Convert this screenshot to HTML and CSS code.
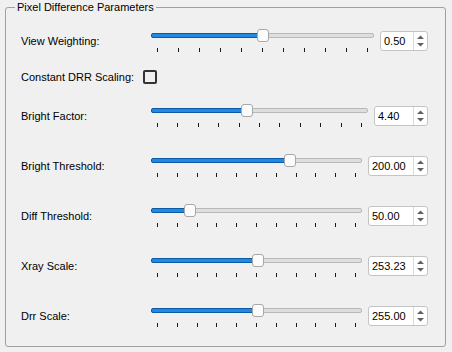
FILE: index.html
```html
<!DOCTYPE html>
<html lang="en">
<head>
    <meta charset="UTF-8">
    <title>Pixel Difference Parameters</title>
    <link rel="stylesheet" href="styles.css">
</head>
<body>
    <fieldset class="group">
        <legend>Pixel Difference Parameters</legend>
        <div class="form">
            <div class="row first">
                <span class="label">View Weighting:</span>
                <div class="slider" style="--v: 0.5">
                    <div class="track"><div class="fill"></div></div>
                    <div class="handle"></div>
                    <div class="ticks"><i></i><i></i><i></i><i></i><i></i><i></i><i></i><i></i><i></i><i></i><i></i></div>
                </div>
                <div class="spin w48">
                    <span class="value">0.50</span>
                    <span class="arrows"><svg width="9" height="12" viewBox="0 0 9 12"><polygon points="1,4 4.5,0.5 8,4" /><polygon points="1,8 4.5,11.5 8,8" /></svg></span>
                </div>
            </div>

            <div class="row check-row">
                <span class="label">Constant DRR Scaling:</span>
                <span class="checkbox"></span>
            </div>

            <div class="row third">
                <span class="label">Bright Factor:</span>
                <div class="slider" style="--v: 0.44">
                    <div class="track"><div class="fill"></div></div>
                    <div class="handle"></div>
                    <div class="ticks"><i></i><i></i><i></i><i></i><i></i><i></i><i></i><i></i><i></i><i></i><i></i></div>
                </div>
                <div class="spin w54">
                    <span class="value">4.40</span>
                    <span class="arrows"><svg width="9" height="12" viewBox="0 0 9 12"><polygon points="1,4 4.5,0.5 8,4" /><polygon points="1,8 4.5,11.5 8,8" /></svg></span>
                </div>
            </div>

            <div class="row">
                <span class="label">Bright Threshold:</span>
                <div class="slider" style="--v: 0.667">
                    <div class="track"><div class="fill"></div></div>
                    <div class="handle"></div>
                    <div class="ticks"><i></i><i></i><i></i><i></i><i></i><i></i><i></i><i></i><i></i><i></i><i></i></div>
                </div>
                <div class="spin w60">
                    <span class="value">200.00</span>
                    <span class="arrows"><svg width="9" height="12" viewBox="0 0 9 12"><polygon points="1,4 4.5,0.5 8,4" /><polygon points="1,8 4.5,11.5 8,8" /></svg></span>
                </div>
            </div>

            <div class="row">
                <span class="label">Diff Threshold:</span>
                <div class="slider" style="--v: 0.167">
                    <div class="track"><div class="fill"></div></div>
                    <div class="handle"></div>
                    <div class="ticks"><i></i><i></i><i></i><i></i><i></i><i></i><i></i><i></i><i></i><i></i><i></i></div>
                </div>
                <div class="spin w60">
                    <span class="value">50.00</span>
                    <span class="arrows"><svg width="9" height="12" viewBox="0 0 9 12"><polygon points="1,4 4.5,0.5 8,4" /><polygon points="1,8 4.5,11.5 8,8" /></svg></span>
                </div>
            </div>

            <div class="row">
                <span class="label">Xray Scale:</span>
                <div class="slider" style="--v: 0.506">
                    <div class="track"><div class="fill"></div></div>
                    <div class="handle"></div>
                    <div class="ticks"><i></i><i></i><i></i><i></i><i></i><i></i><i></i><i></i><i></i><i></i><i></i></div>
                </div>
                <div class="spin w60">
                    <span class="value">253.23</span>
                    <span class="arrows"><svg width="9" height="12" viewBox="0 0 9 12"><polygon points="1,4 4.5,0.5 8,4" /><polygon points="1,8 4.5,11.5 8,8" /></svg></span>
                </div>
            </div>

            <div class="row">
                <span class="label">Drr Scale:</span>
                <div class="slider" style="--v: 0.51">
                    <div class="track"><div class="fill"></div></div>
                    <div class="handle"></div>
                    <div class="ticks"><i></i><i></i><i></i><i></i><i></i><i></i><i></i><i></i><i></i><i></i><i></i></div>
                </div>
                <div class="spin w60">
                    <span class="value">255.00</span>
                    <span class="arrows"><svg width="9" height="12" viewBox="0 0 9 12"><polygon points="1,4 4.5,0.5 8,4" /><polygon points="1,8 4.5,11.5 8,8" /></svg></span>
                </div>
            </div>
        </div>
    </fieldset>
</body>
</html>
```

FILE: styles.css
```css
body {
    margin: 0;
    background-color: #f0f0f0;
    font-family: 'Liberation Sans', Arial, sans-serif;
    font-size: 11px;
    color: #000;
}
.group {
    box-sizing: border-box;
    width: 441px;
    margin: 0 0 0 5px;
    padding: 14px 17px 18px 9px;
    border: 1px solid #a0a0a0;
    border-radius: 3px;
}
.group legend {
    padding: 0 2px;
    line-height: 15px;
}
.form {
    padding-left: 6px;
    display: flex;
    flex-direction: column;
}
.row {
    display: grid;
    grid-template-columns: 122px 1fr auto;
    align-items: center;
    height: 24px;
    margin-top: 26px;
}
.row.first {
    margin-top: 0;
}
.row.check-row {
    height: 14px;
    margin-top: 17px;
}
.row.third {
    margin-top: 20px;
}
.label {
    white-space: nowrap;
}
.slider {
    position: relative;
    margin: 0 6px 0 8px;
    height: 24px;
}
.track {
    position: relative;
    box-sizing: border-box;
    height: 5px;
    margin-top: 4px;
    border: 1px solid #b9b9b9;
    border-radius: 2px;
    background-color: #dedede;
}
.fill {
    position: absolute;
    left: -1px;
    top: -1px;
    height: 5px;
    box-sizing: border-box;
    width: calc((100% - 10px) * var(--v) + 6px);
    border: 1px solid #0b5aa6;
    border-radius: 2px;
    background-color: #2388e0;
}
.handle {
    position: absolute;
    top: 0;
    left: calc((100% - 12px) * var(--v));
    box-sizing: border-box;
    width: 12px;
    height: 13px;
    border: 1px solid #a8a8a8;
    border-radius: 3px;
    background-color: #fbfbfb;
}
.ticks {
    display: flex;
    justify-content: space-between;
    padding: 0 6px;
    margin-top: 10px;
}
.ticks i {
    width: 1px;
    height: 4px;
    background-color: #1a1a1a;
}
.spin {
    box-sizing: border-box;
    display: flex;
    height: 20px;
    border: 1px solid #c4c4c4;
    border-radius: 3px;
    background-color: #fff;
}
.w48 { width: 48px; }
.w54 { width: 54px; }
.w60 { width: 60px; }
.spin .value {
    flex: 1;
    padding-left: 3px;
    line-height: 18px;
}
.spin .arrows {
    width: 13px;
    border-left: 1px solid #dadada;
    display: flex;
    align-items: center;
    justify-content: center;
}
.spin .arrows polygon {
    fill: #606060;
}
.checkbox {
    box-sizing: border-box;
    width: 14px;
    height: 14px;
    border: 2px solid #333;
    border-radius: 2px;
}
```
